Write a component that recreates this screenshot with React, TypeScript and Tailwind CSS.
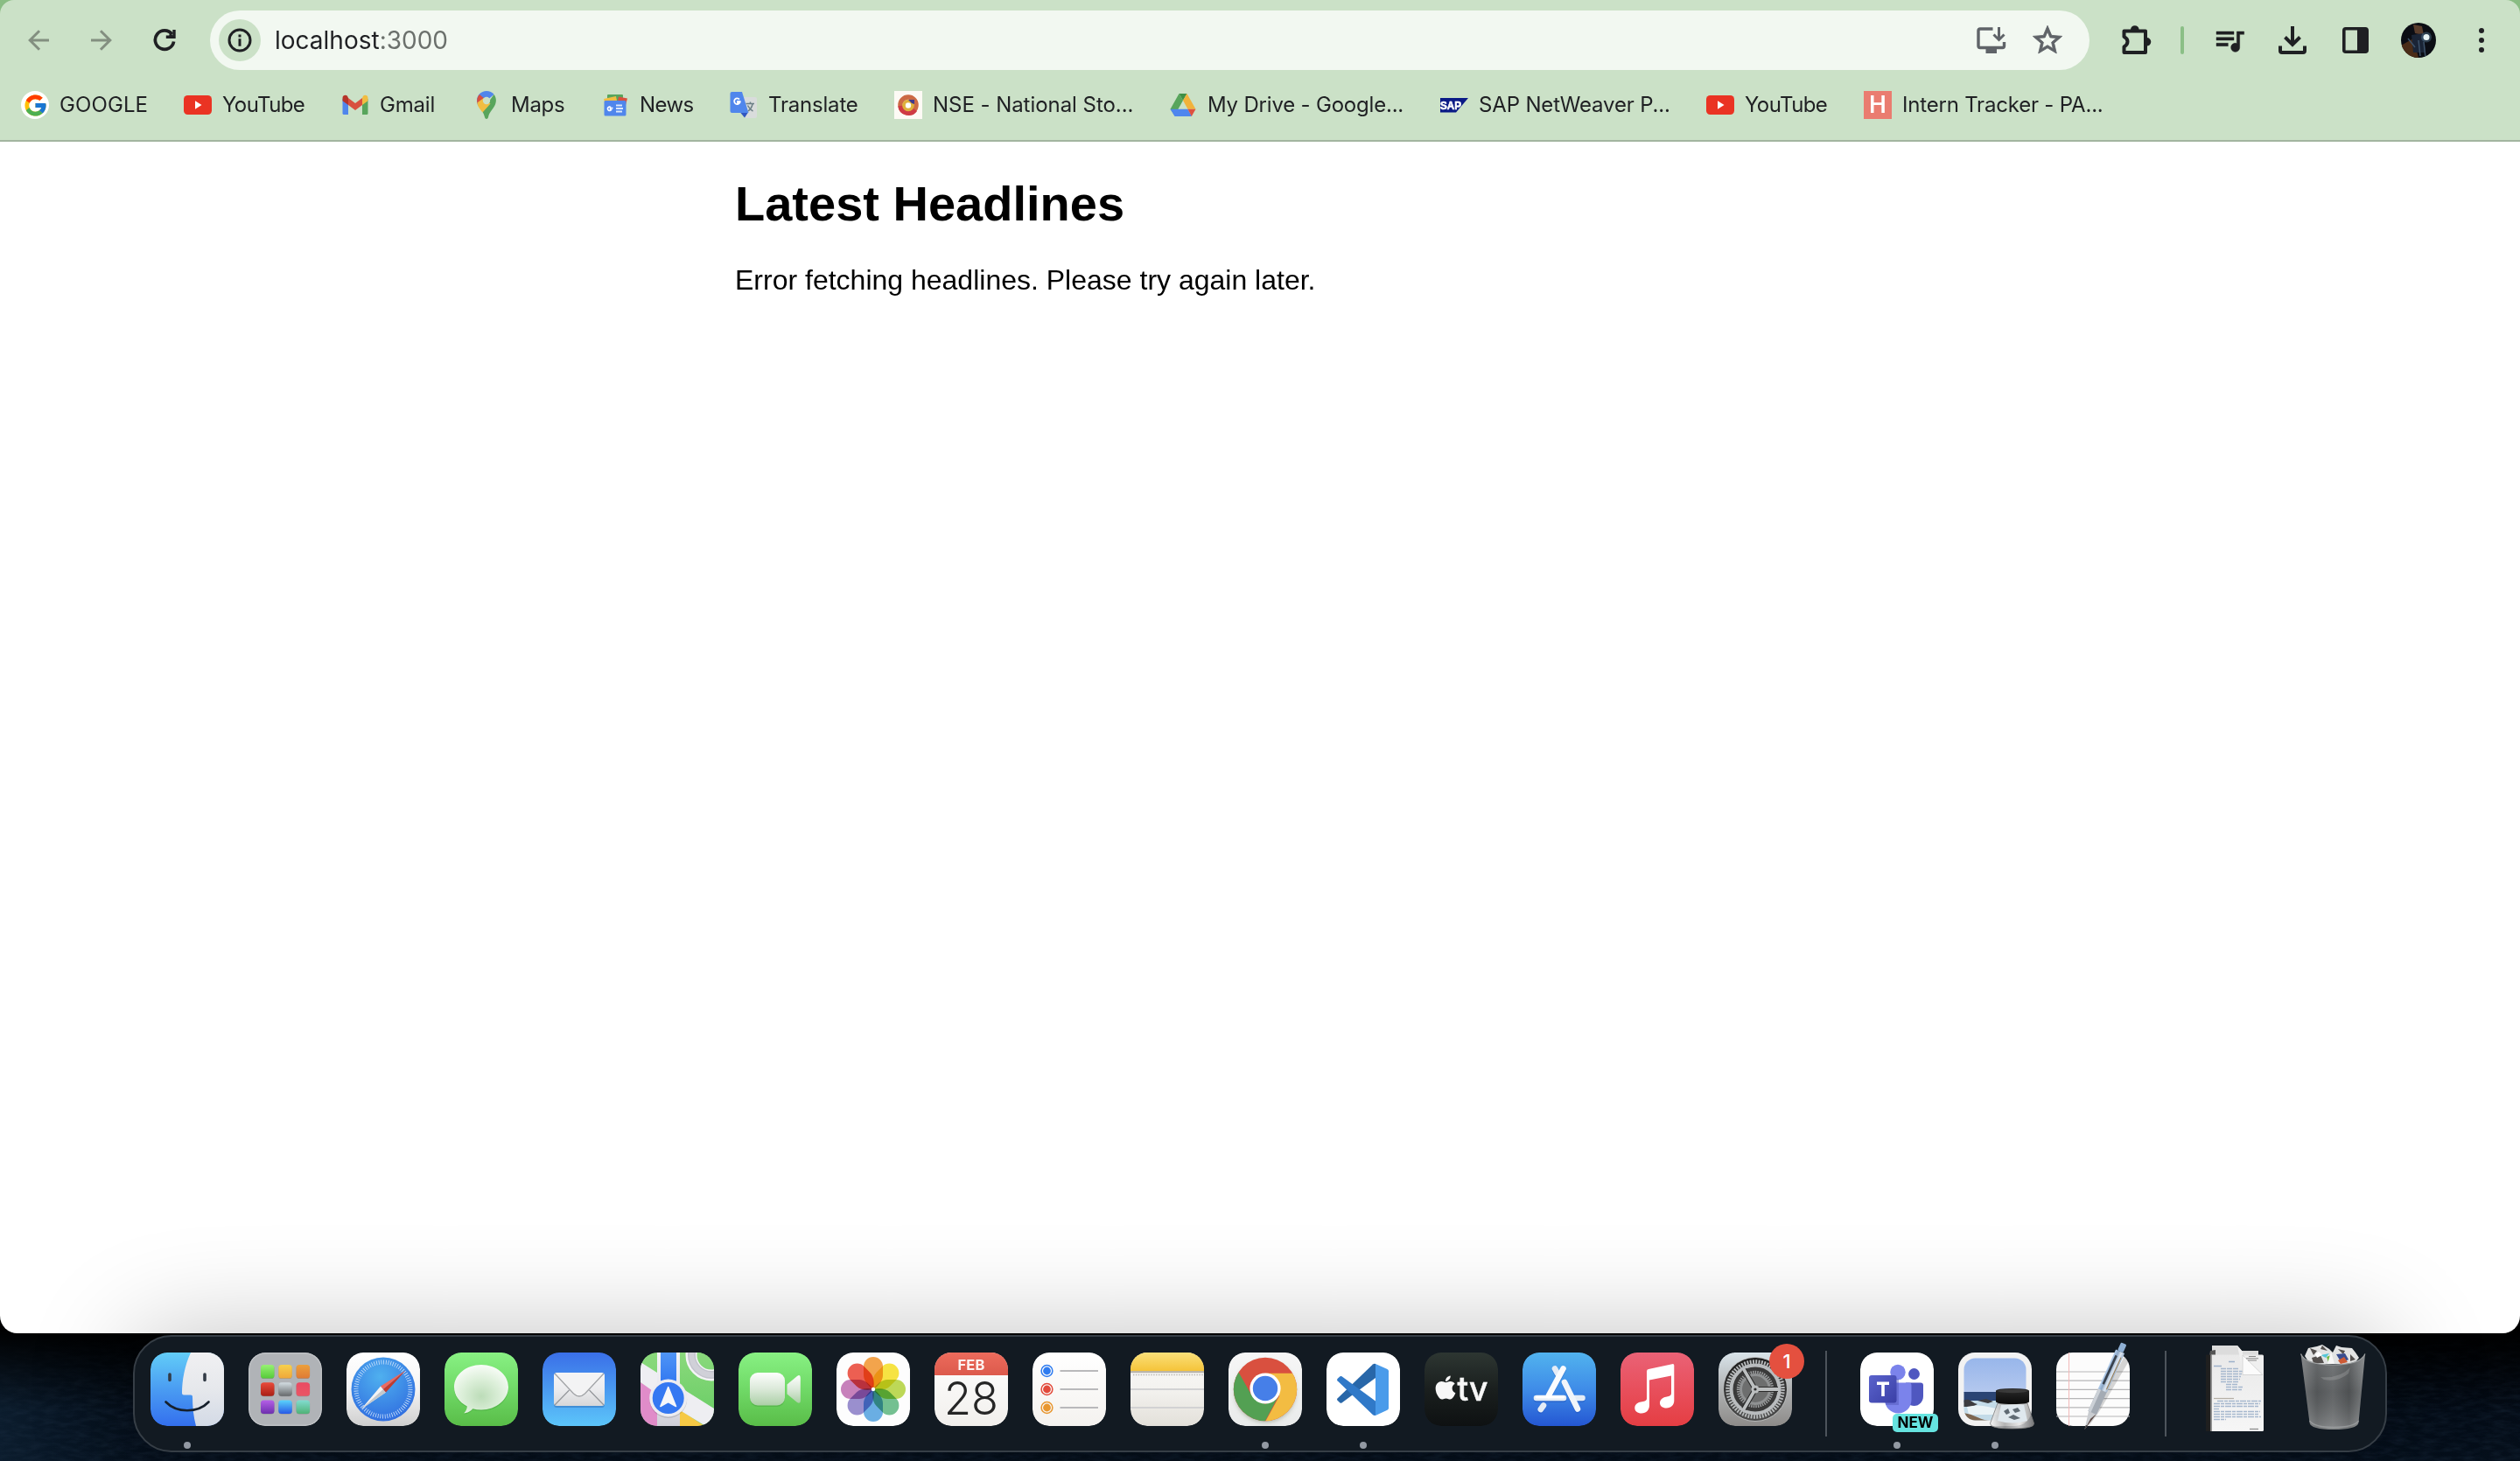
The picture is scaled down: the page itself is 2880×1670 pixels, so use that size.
import React from "react";
import { FcGoogle } from "react-icons/fc";
import { FaApple } from "react-icons/fa";

/* ---------- bookmark favicons, drawn in a 32 x 32 box ---------- */

const Fav = ({ children }: { children: React.ReactNode }) => (
  <svg viewBox="0 0 32 32" className="size-8 shrink-0">{children}</svg>
);

const GoogleFav = () => (
  <span className="flex size-8 shrink-0 items-center justify-center rounded-full bg-white">
    <FcGoogle className="size-[29px]" />
  </span>
);

const YouTubeFav = () => (
  <Fav>
    <rect y="5" width="32" height="22" rx="4.500" fill="#ea3323" />
    <path d="M13 11.200V20.800L20.500 16Z" fill="#fff" />
  </Fav>
);

const GmailFav = () => (
  <Fav>
    <path d="M1.500 9V25.500a1.500 1.500 0 0 0 1.500 1.500H8V13Z" fill="#5086ec" />
    <path d="M30.500 9V25.500a1.500 1.500 0 0 1-1.500 1.500H24V13Z" fill="#58a55c" />
    <path d="M24 8v8l6.500-4.800V8c0-3-3.500-4-5.500-2.300Z" fill="#f1bd42" />
    <path d="M8 16V8l8 6 8-6v8l-8 6Z" fill="#d85040" />
    <path d="M8 8v8l-6.500-4.800V8c0-3 3.500-4 5.500-2.300Z" fill="#b6342a" />
  </Fav>
);

const MapsFav = () => (
  <Fav>
    <path d="M16 0C9.500 0 5 5 5 11.200c0 3 1 5 2.500 7L24.500 4C22.500 1.500 19.500 0 16 0Z" fill="#5086ec" />
    <path d="M8 4 L14 9 8 16 5.500 14C4.500 10 5.500 6.500 8 4Z" fill="#d85040" />
    <path d="M24.500 4C28 8.500 27.500 14 24 19c-3.500 5-5 6.500-6 11-.5 2.500-3.500 2.500-4 0-.6-2.500-1.500-4.500-3-7Z" fill="#58a55c" />
    <path d="M20.500 14.500 11.500 24.500C9 21 6 18 5.300 13.500L12.800 8Z" fill="#f1bd42" />
    <circle cx="16" cy="11" r="4.200" fill="#cbe1c7" />
  </Fav>
);

const NewsFav = () => (
  <Fav>
    <rect x="7" y="4" width="18" height="12" rx="1" fill="#58a55c" />
    <path d="M3 9 17 6 19 16H5Z" fill="#f1bd42" />
    <path d="M20 6.500 30 8.500 28 16H18Z" fill="#d85040" />
    <rect x="3.500" y="11" width="25" height="17.500" rx="1.500" fill="#5086ec" />
    <path d="M13.500 19.500h-3v2h1a2.200 2.200 0 1 1-.5-3" fill="none" stroke="#fff" strokeWidth="1.600" />
    <path d="M17 16.500h7M17 20h8M17 23.500h7" stroke="#dbe7fb" strokeWidth="1.800" />
  </Fav>
);

const TranslateFav = () => (
  <Fav>
    <path d="M12 7H29a2 2 0 0 1 2 2V29a2 2 0 0 1-2 2H18Z" fill="#d9dcdc" />
    <path d="M12 24.500H21L17 30.500Z" fill="#3156c0" />
    <path d="M2.500 1H14L21.500 25H2.500A2 2 0 0 1 .5 23V3A2 2 0 0 1 2.500 1Z" fill="#5086ec" />
    <path d="M12.500 12H9v1.500h2.300A3.300 3.300 0 1 1 11 9.600" fill="none" stroke="#fff" strokeWidth="1.800" />
    <path d="M18.500 14.500H28M23.500 12.500v2M26 15c-.8 4-3 6.500-5 8M20.500 16.500c1.500 3 4 5.500 6 6.500" fill="none" stroke="#6c7f86" strokeWidth="1.500" />
  </Fav>
);

const NseFav = () => (
  <Fav>
    <rect width="32" height="32" fill="#fdfaf5" />
    <circle cx="16" cy="16" r="9" fill="none" stroke="#cc6a45" strokeWidth="5.500" />
    <path d="M6.800 17A9.500 9.500 0 0 0 24 21.500" fill="none" stroke="#cf3a44" strokeWidth="5" />
    <circle cx="16" cy="16.500" r="5" fill="none" stroke="#dfb03c" strokeWidth="3.600" />
    <path d="M16 10h7v5l-3-1Z" fill="#403a8c" />
    <circle cx="16" cy="16.500" r="2.600" fill="#fff" />
  </Fav>
);

const DriveFav = () => (
  <Fav>
    <path d="M11.500 3H20.500L16 11Z" fill="#3f8f46" />
    <path d="M11.500 3 16 10.800 6.500 28 1.500 20.800Z" fill="#58a55c" />
    <path d="M20.500 3 30.500 20.800H21.500L16 10.800Z" fill="#f1b23c" />
    <path d="M1.500 20.800H21.500L26 29H6.500Z" fill="#4f86ee" />
    <path d="M21.500 20.800H30.500L25.800 29Z" fill="#de5140" />
  </Fav>
);

const SapFav = () => (
  <Fav>
    <path d="M0 8H32L18 24.500H0Z" fill="#0a1a86" />
    <text x="0" y="20.800" fontFamily="Liberation Sans, sans-serif" fontWeight="700" fontSize="13" textLength="24" lengthAdjust="spacingAndGlyphs" fill="#fff" stroke="#fff" strokeWidth=".6">SAP</text>
  </Fav>
);

const HFav = () => (
  <span className="flex size-8 shrink-0 items-center justify-center bg-[#ea7c70] font-['Roboto',sans-serif] text-[28px] leading-none font-medium text-white">H</span>
);

const bookmarks = [
  { Icon: GoogleFav, label: "GOOGLE", cls: "w-[186px]", t: "tracking-[0.1px]" },
  { Icon: YouTubeFav, label: "YouTube", cls: "w-[180px]", t: "tracking-[-0.6px]" },
  { Icon: GmailFav, label: "Gmail", cls: "w-[150px]", t: "tracking-[-0.2px]" },
  { Icon: MapsFav, label: "Maps", cls: "w-[147px]", t: "tracking-[-0.3px]" },
  { Icon: NewsFav, label: "News", cls: "w-[147px]", t: "tracking-[-0.6px]" },
  { Icon: TranslateFav, label: "Translate", cls: "w-[188px]", t: "tracking-[-0.2px]" },
  { Icon: NseFav, label: "NSE - National Sto...", cls: "w-[314px]", t: "tracking-[-0.05px]" },
  { Icon: DriveFav, label: "My Drive - Google...", cls: "w-[310px]", t: "tracking-[-0.2px]" },
  { Icon: SapFav, label: "SAP NetWeaver P...", cls: "w-[304px]", t: "tracking-[-0.15px]" },
  { Icon: YouTubeFav, label: "YouTube", cls: "w-[180px]", t: "tracking-[-0.6px]" },
  { Icon: HFav, label: "Intern Tracker - PA...", cls: "w-[300px]", t: "tracking-[-0.2px]" },
];

/* ---------- dock icons, drawn in an 84 x 84 box ---------- */

const Tile = ({ children, clip = true, id }: { children: React.ReactNode; clip?: boolean; id: string }) => (
  <svg viewBox="0 0 84 84" className="block size-[84px] overflow-visible">
    <defs>
      <clipPath id={`clip-${id}`}><rect width="84" height="84" rx="19" /></clipPath>
    </defs>
    {clip ? <g clipPath={`url(#clip-${id})`}>{children}</g> : children}
  </svg>
);

const Grad = ({ id, stops, x2 = 0, y2 = 1 }: { id: string; stops: string[]; x2?: number; y2?: number }) => (
  <linearGradient id={id} x1="0" y1="0" x2={x2} y2={y2}>
    {stops.map((c, i) => <stop key={i} offset={i / (stops.length - 1)} stopColor={c} />)}
  </linearGradient>
);

const Base = ({ fill }: { fill: string }) => <rect width="84" height="84" rx="19" fill={fill} />;

const Finder = () => (
  <Tile id="finder">
    <Grad id="fi1" stops={["#62cdf8", "#4a9cf2", "#336fee"]} />
    <Grad id="fi2" stops={["#f0f0f2", "#e6e8ec", "#d3dae6"]} />
    <Base fill="url(#fi1)" />
    <path d="M46 0C39 15 36 32 36 46.500q0 2 2 2h8q2 0 2 2C48 62 49 73 52 84H84V0Z" fill="url(#fi2)" />
    <path d="M22 25v6.500M62 25v6.500" stroke="#333b46" strokeWidth="3.600" strokeLinecap="round" />
    <path d="M17.500 56.500C30 69.500 54 69.500 66.500 56.500" fill="none" stroke="#16202c" strokeWidth="2.600" strokeLinecap="round" />
  </Tile>
);

const launch = [
  ["#97f173", "#56cb3a"], ["#f6d04d", "#f0a83a"], ["#eca03c", "#df7a35"],
  ["#e94b3b", "#a91f14"], ["#d3dde2", "#66696b"], ["#ea4a62", "#ea5565"],
  ["#b45fe6", "#6d2fae"], ["#5ad3fb", "#2858e6"], ["#82dcd0", "#4fb276"],
];
const Launchpad = () => (
  <Tile id="launch">
    <Base fill="#b0b3b7" />
    <rect x=".8" y=".8" width="82.400" height="82.400" rx="18.500" fill="none" stroke="#c0c3c6" strokeWidth="1.200" />
    {launch.map((c, i) => (
      <g key={i}>
        <Grad id={`la${i}`} stops={c} />
        <rect x={14 + (i % 3) * 20.300} y={14.500 + Math.floor(i / 3) * 20.300} width="15.500" height="15.500" rx="3.600" fill="#00000030" />
        <rect x={14 + (i % 3) * 20.300} y={14 + Math.floor(i / 3) * 20.300} width="15.500" height="15.500" rx="3.600" fill={`url(#la${i})`} />
      </g>
    ))}
  </Tile>
);

const Safari = () => (
  <Tile id="safari">
    <Grad id="sa1" stops={["#ffffff", "#f4f4f4", "#cfcfcf"]} />
    <radialGradient id="sa2" cx=".45" cy=".3" r=".75"><stop offset="0" stopColor="#4fb0ef" /><stop offset="1" stopColor="#2f6bdf" /></radialGradient>
    <Base fill="url(#sa1)" />
    <circle cx="42" cy="42" r="36.500" fill="url(#sa2)" />
    <circle cx="42" cy="42" r="31" fill="none" stroke="#cfe4fb" strokeWidth="5" strokeDasharray=".8 1.905" />
    <path d="M16.500 65 39 38.500 45 45.500Z" fill="#f3f3f3" />
    <path d="M16.500 65 42 42 45 45.500Z" fill="#c4c8cc" />
    <path d="M67.500 20.500 39 38.500 42 42Z" fill="#ec6a60" />
    <path d="M67.500 20.500 45 45.500 42 42Z" fill="#c23b2d" />
  </Tile>
);

const greens = ["#88f183", "#70d967", "#59bd48"];
const Messages = () => (
  <Tile id="msg">
    <Grad id="ms1" stops={greens} />
    <radialGradient id="ms2" cx=".5" cy=".65" r=".65"><stop offset="0" stopColor="#bcdcb8" /><stop offset=".55" stopColor="#dcefd9" /><stop offset="1" stopColor="#f8fcf7" /></radialGradient>
    <Base fill="url(#ms1)" />
    <path d="M42 14.500c17.100 0 31 11.400 31 25.500S59.100 65.500 42 65.500c-3.400 0-6.700-.4-9.700-1.200C30 67 26 69.300 22.300 69.300c2.300-2.200 3.500-5 3.500-7.800C17 56.800 11 49 11 40c0-14.100 13.900-25.500 31-25.500Z" fill="#3c9a3460" transform="translate(0 1.200)" />
    <path d="M42 14c17.100 0 31 11.400 31 25.500S59.100 65.500 42 65.500c-3.400 0-6.700-.4-9.700-1.200C30 67 26 69.300 22.300 69.300c2.300-2.200 3.500-5 3.500-7.800C17 56.800 11 49 11 39.500 11 25.400 24.900 14 42 14Z" fill="url(#ms2)" />
  </Tile>
);

const Mail = () => (
  <Tile id="mail">
    <Grad id="ma1" stops={["#3a6fe8", "#4a9af0", "#5cc5fa"]} />
    <Grad id="ma2" stops={["#f5f5f6", "#ececee", "#d6d7d9"]} />
    <Base fill="url(#ma1)" />
    <rect x="13" y="25" width="58" height="38" rx="3.500" fill="#1c4f9a55" />
    <rect x="13" y="23" width="58" height="38" rx="3.500" fill="url(#ma2)" />
    <path d="M14 60 30.500 43M70 60 53.500 43" stroke="#94979b" strokeWidth="1.200" />
    <path d="M14 24 35.500 47q6.500 6 13 0L70 24Z" fill="#f3f3f4" />
    <path d="M14 24 35.500 47q6.500 6 13 0L70 24" fill="none" stroke="#a2a4a7" strokeWidth="1.300" />
  </Tile>
);

const MapsApp = () => (
  <Tile id="maps">
    <Grad id="mp1" stops={["#8ad97c", "#6fcf69"]} />
    <Grad id="mp2" stops={["#4f95f6", "#2e74f0"]} />
    <Grad id="mp3" stops={["#f3f3f6", "#e8e8ee", "#cfcfd8"]} />
    <Base fill="url(#mp1)" />
    <path d="M0 34 26 50V84H0Z" fill="#e08cc9" />
    <path d="M40 62 76 86H40Z" fill="#f6c945" />
    <path d="M0 11 84 64V90L45 66 0 34Z" fill="#eeeef2" />
    <path d="M19 0H45V84H19Z" fill="url(#mp3)" />
    <path d="M45 0 H84V63.500L45 39Z" fill="url(#mp1)" />
    <path d="M23 0H41V40H23Z" fill="url(#mp2)" />
    <circle cx="81" cy="3" r="23" fill="none" stroke="#f4f4f6" strokeWidth="13" />
    <circle cx="81" cy="3" r="22.500" fill="none" stroke="#c3c3cd" strokeWidth="9" />
    <circle cx="81" cy="3" r="22.500" fill="none" stroke="#d0d0d8" strokeWidth="6" />
    <circle cx="31.700" cy="53.500" r="21.500" fill="#00000022" />
    <circle cx="31.700" cy="52" r="21.500" fill="#ececf1" />
    <circle cx="31.700" cy="52" r="18" fill="#3478f2" />
    <path d="M31.700 39.500 40.500 61.500 31.700 56.500 22.900 61.500Z" fill="#f6f7fa" stroke="#f6f7fa" strokeWidth="1.600" strokeLinejoin="round" />
  </Tile>
);

const FaceTime = () => (
  <Tile id="ft">
    <Grad id="ft1" stops={greens} />
    <Grad id="ft2" stops={["#fdfefd", "#dbe9d9", "#abcfa6"]} />
    <Base fill="url(#ft1)" />
    <rect x="13" y="25" width="40" height="37" rx="9" fill="#2f7f2740" />
    <rect x="13" y="23" width="40" height="37.500" rx="9" fill="url(#ft2)" />
    <path d="M55.500 36.500 67 27q3.800-2.500 3.800 1.800V55q0 4.300-3.800 2L55.500 47.500Z" fill="url(#ft2)" />
  </Tile>
);

const petals = ["#f29a38", "#f5e02f", "#b6d445", "#65b985", "#5aa5e0", "#8f83c9", "#c173b4", "#ea4e3f"];
const Photos = () => (
  <Tile id="photos">
    <Base fill="#fdfdfd" />
    <g transform="translate(42 42)" className="isolate">
      {petals.map((c, i) => (
        <path key={c} d="M0 0C-6-4-11-10-11-16V-26A11 11 0 0 1 11-26V-16C11-10 6-4 0 0Z" fill={c} fillOpacity=".9" transform={`rotate(${i * 45})`} className="mix-blend-multiply" />
      ))}
      <circle r="2.200" fill="#fff" />
    </g>
  </Tile>
);

const Calendar = () => (
  <Tile id="cal">
    <Grad id="ca1" stops={["#ffffff", "#f1efec"]} />
    <Grad id="ca2" stops={["#ec6b5c", "#dc5a4c"]} />
    <Base fill="url(#ca1)" />
    <rect width="84" height="26" fill="url(#ca2)" />
    <text x="42" y="20" textAnchor="middle" fontFamily="Inter, sans-serif" fontWeight="700" fontSize="16.500" textLength="31" fill="#fdf3f1">FEB</text>
    <text x="42" y="71" textAnchor="middle" fontFamily="Inter, sans-serif" fontWeight="300" fontSize="52" textLength="62" lengthAdjust="spacingAndGlyphs" fill="#262626">28</text>
  </Tile>
);

const Reminders = () => (
  <Tile id="rem">
    <Grad id="re1" stops={["#ffffff", "#f4f2ef"]} />
    <Base fill="url(#re1)" />
    {["#2f7cf0", "#e24a3b", "#e8962f"].map((c, i) => (
      <g key={c}>
        <circle cx="16.500" cy={21 + i * 21} r="6.400" fill="none" stroke={c} strokeWidth="1.500" />
        <circle cx="16.500" cy={21 + i * 21} r="4.400" fill={c} />
        <path d={`M31.500 ${21 + i * 21}H75`} stroke="#b9b9bb" strokeWidth="1.800" />
      </g>
    ))}
  </Tile>
);

const Notes = () => (
  <Tile id="notes">
    <Grad id="no1" stops={["#fbfaf8", "#f3f2ef", "#e3e0da"]} />
    <Grad id="no2" stops={["#fae07a", "#f5c338"]} />
    <Base fill="url(#no1)" />
    <rect width="84" height="21.500" fill="url(#no2)" />
    <rect y="21.200" width="84" height="2" fill="#b3b0a8" />
    <path d="M3 25.500H84" stroke="#b9b7b2" strokeWidth="1.400" strokeDasharray="1.400 1.500" />
    <path d="M0 42H84M0 63H84" stroke="#d2d2d3" strokeWidth="1.800" />
  </Tile>
);

const Chrome = () => (
  <Tile id="chrome">
    <Grad id="ch1" stops={["#f6f6f6", "#e9ebeb"]} />
    <clipPath id="chc"><circle cx="42" cy="42" r="36.200" /></clipPath>
    <filter id="chs" x="-20%" y="-20%" width="140%" height="150%"><feGaussianBlur stdDeviation="2.500" /></filter>
    <Base fill="url(#ch1)" />
    <circle cx="42" cy="45" r="35" fill="#5d6a4a66" filter="url(#chs)" />
    <g clipPath="url(#chc)">
      <rect width="84" height="84" fill="#d9503f" />
      <path d="M11.500 22.500 26.500 49 42 59 57 50 41 80 42 84H0V22Z" fill="#53a053" />
      <path d="M84 23.700H42L58 50 41.500 80V84H84Z" fill="#f3bc42" />
    </g>
    <circle cx="42" cy="41" r="17.600" fill="#fff" />
    <circle cx="42" cy="41" r="14.200" fill="#467fe8" />
  </Tile>
);

const VSCode = () => (
  <Tile id="vsc">
    <Base fill="#ffffff" />
    <path d="M53 13.500q1.500-1 3-.5V29L17.500 57.500q-1 .6-2 0L12.500 54.700q-1-1.200 0-2.200Z" fill="#2867a9" />
    <path d="M53 71.300q1.500 1 3 .5V55.500L17.500 27.300q-1-.6-2 0L12.500 30q-1 1.200 0 2.200Z" fill="#3079c8" />
    <path d="M56 13 69.500 19q1.500.8 1.500 2.300V63.500q0 1.500-1.500 2.300L56 72Z" fill="#4a9bea" />
  </Tile>
);

const AppleTV = () => (
  <Tile id="tv">
    <Grad id="tv1" stops={["#2d3632", "#1a1f1e", "#0e1112"]} />
    <Base fill="url(#tv1)" />
    <FaApple x={8.500} y={24.500} size={31} color="#f7f7f7" />
    <text x="37.500" y="55" fontFamily="Inter, sans-serif" fontWeight="500" fontSize="38" textLength="35" lengthAdjust="spacingAndGlyphs" fill="#f7f7f7" stroke="#f7f7f7" strokeWidth=".5">tv</text>
  </Tile>
);

const AppStore = () => (
  <Tile id="as">
    <Grad id="as1" stops={["#51b3ee", "#3f8ce8", "#2457d3"]} />
    <Base fill="url(#as1)" />
    <g strokeLinecap="round" strokeWidth="6.600" fill="none">
      <g stroke="#1c4bb055" transform="translate(0 1.600)">
        <path d="M46.500 18.500 28 52M37 18.500 39.500 23M48 34 63 64.500M16 52H47M60 52H68.500M23 61 20.500 65" />
      </g>
      <path d="M37 18.500 40 24M60 52H68.500M16 52H47M24 60.500 20.800 65" stroke="#e4ecf6" />
      <path d="M48 34 63 64.500" stroke="#f1f5fa" />
      <path d="M46.500 18.500 30 49" stroke="#fafcfe" />
      <path d="M16 51H47" stroke="#fff" strokeWidth="3" />
    </g>
  </Tile>
);

const Music = () => (
  <Tile id="music">
    <Grad id="mu1" stops={["#ea6276", "#e84f5c", "#e53e43"]} />
    <Base fill="url(#mu1)" />
    <path d="M30 21.500q0-2 2-2.400L59 13.200q2.300-.5 2.300 1.600V55c0 4.500-3.300 8.500-8.800 8.500-4.500 0-7.500-2.500-7.500-5.800 0-4 3.300-6.300 7-7l3-.7q3-.7 3-3.500V26.500L33 31.500V60.500C33 65.500 29.500 69.500 24 69.500c-4.500 0-7.700-2.500-7.700-6 0-4 3-6.300 7-7l3.700-.7q3-.7 3-3.300Z" fill="#fff" />
  </Tile>
);

const Settings = () => (
  <Tile id="set">
    <Grad id="se1" stops={["#d9e4ea", "#b0b2b3", "#8d8b89"]} />
    <Grad id="se2" stops={["#1c1c1c", "#4d4d4d"]} />
    <Base fill="url(#se1)" />
    <circle cx="42" cy="42" r="36.500" fill="url(#se2)" stroke="#c9cbcb" strokeWidth=".8" />
    <circle cx="42" cy="42" r="31.500" fill="none" stroke="#b7babb" strokeWidth="4.500" strokeDasharray="1.900 1.400" />
    <circle cx="42" cy="42" r="27.500" fill="#3a3a3a" stroke="#b9bcbe" strokeWidth="4" />
    <circle cx="42" cy="42" r="19.500" fill="none" stroke="#9a9c9d" strokeWidth="3.400" strokeDasharray="1.500 1.100" />
    <circle cx="42" cy="42" r="16.500" fill="#6d6e6e" stroke="#8f9192" strokeWidth="3" />
    <path d="M42 42H68M42 42 29 19.500M42 42 29 64.500" stroke="#2a2a2a" strokeWidth="6" />
    <path d="M42 42H69M42 42 28.500 18.600M42 42 28.500 65.400" stroke="#bcbfc0" strokeWidth="3.800" />
    <circle cx="42" cy="42" r="4.500" fill="#bcbfc0" />
    <circle cx="42" cy="42" r="1.600" fill="#2b2b2b" />
  </Tile>
);

const Teams = () => (
  <Tile id="teams">
    <Grad id="te1" stops={["#5a63cc", "#3a3fa6"]} x2={1} />
    <Base fill="#ffffff" />
    <circle cx="61.500" cy="24.500" r="6.400" fill="#4f57c0" />
    <path d="M52 34.500H69q3 0 3 3V50c0 6-4.500 11-10.500 11S52 56 52 50Z" fill="#4f57c0" />
    <circle cx="43" cy="22.500" r="8.700" fill="#7b83eb" />
    <path d="M28 34.500H55.500q3 0 3 3V54c0 8.500-6.500 15.500-15 15.500S28 62.500 28 54Z" fill="#7b83eb" />
    <path d="M28 30H44V60H29Z" fill="#4d55b570" />
    <rect x="10" y="26" width="31.500" height="31.500" rx="3" fill="url(#te1)" />
    <path d="M19 35.300H33M26 35.300V50" stroke="#fff" strokeWidth="3.600" />
  </Tile>
);

const Preview = () => (
  <Tile id="prev" clip={false}>
    <Grad id="pr1" stops={["#93b3ea", "#b4c8ee"]} />
    <Grad id="pr2" stops={["#2b2b2b", "#0a0a0a"]} />
    <Grad id="pr3" stops={["#f5f5f5", "#a9a9a9", "#e6e6e6", "#8a8a8a"]} x2={1} y2={0} />
    <clipPath id="prc"><rect x="6.500" y="6.500" width="71" height="71" rx="13" /></clipPath>
    <Base fill="#f2f2f2" />
    <g clipPath="url(#prc)">
      <rect width="84" height="46" fill="url(#pr1)" />
      <rect y="45" width="84" height="12" fill="#2a4474" />
      <rect y="55" width="84" height="24" fill="#c3dbe8" />
      <path d="M4 56q6-4 10-1t8 4l-6 3H4ZM22 55l10-2 8 3-6 2Z" fill="#3d3c3f" />
      <path d="M10 62q12-3 24 0t18 3v6H12Z" fill="#eaf3f6" />
      <path d="M6 69q8 1 16 5t16 4H6Z" fill="#7d6650" />
    </g>
    <path d="M45 58H79L86.500 81q1 6-25 6t-25-6Z" fill="url(#pr3)" fillOpacity=".85" stroke="#7b7b7b" strokeWidth=".8" />
    <path d="M49 60H75L79 78q-17 5-34 0Z" fill="#dfe8ee" />
    <path d="M52 67l5-3 2 5-4 2ZM62 65l6-2 3 4-6 2ZM57 74l6-3 8 4-7 2Z" fill="#5f6a73" />
    <path d="M43 44q0-3 19-3t19 3V56q0 3-19 3t-19-3Z" fill="url(#pr2)" />
    <ellipse cx="62" cy="44" rx="17" ry="2.200" fill="#3a3a3a" />
  </Tile>
);

const TextEdit = () => (
  <Tile id="te" clip={false}>
    <Grad id="tx1" stops={["#b5d0ee", "#8ba6c6", "#dde6f0", "#9db3cc"]} x2={1} y2={0} />
    <Base fill="#fcfcfc" />
    <path d="M0 22H84M0 32.200H84M0 42.400H84M0 52.600H84M0 62.800H84M0 73H84" stroke="#b5b5b7" strokeWidth="1.200" />
    <path d="M14.500 0V84" stroke="#f2b9b9" strokeWidth="1" />
    <path d="M78 4 44 70 36 86 50 66 84 8Z" fill="#00000028" />
    <g transform="translate(32.500 88) rotate(24.500)">
      <path d="M0 0-4.800-22H4.800Z" fill="#c9ccd0" />
      <path d="M0 0 1-14 4.800-22Z" fill="#5d4a46" />
      <path d="M0 0-.8-5H.8Z" fill="#1d1d1d" />
      <rect x="-5.300" y="-50" width="10.600" height="29" fill="#a4abb4" />
      <rect x="-5.300" y="-50" width="3.500" height="29" fill="#ccd1d7" />
      <rect x="-5.500" y="-98" width="11" height="49" fill="url(#tx1)" />
      <rect x="-3.500" y="-108" width="7" height="10" rx="1.500" fill="#8fb0d4" />
      <rect x="-3.500" y="-92" width="2.600" height="36" fill="#39424e" />
      <rect x="3.200" y="-92" width="1" height="40" fill="#9a7d52" />
    </g>
  </Tile>
);

const docRows = [18.500, 21.500, 24.500, 27.500, 30.500, 33.500, 36.500, 39.500, 42.500];
const docRows2 = [55.500, 58.500, 61.500, 64.500, 67.500, 70.500, 73.500, 76.500];
const Doc = () => (
  <Tile id="doc" clip={false}>
    <Grad id="do1" stops={["#e9e9e9", "#f6f6f6"]} />
    <path d="M14-8H43L48-2H67V60H14Z" fill="#dcdcdc" />
    <path d="M12-2 18-3V8H10Z" fill="#555" />
    <rect x="12" y="2.500" width="61" height="87.500" rx="1.500" fill="url(#do1)" />
    <rect x="7" y="2.500" width="6" height="87.500" fill="#1f1f1f" />
    <rect x="12" y="2.500" width="1.800" height="87.500" fill="#7a7a7a" />
    <path d="M33 10.500H40M16 15.500H25M60 15.500H68" stroke="#9db1ca" strokeWidth="1.400" />
    {docRows.map((y, i) => <path key={y} d={`M${i > 5 ? 30 : 24} ${y}H${44 + ((i * 5) % 6)}`} stroke="#a6b8ce" strokeWidth="1.300" strokeDasharray="6 1" />)}
    <path d="M16 52.500H39" stroke="#b5b0a6" strokeWidth="1.200" />
    {docRows2.map((y, i) => <path key={y} d={`M${i === 0 ? 20 : 16} ${y}H${i === 3 ? 22 : i === 7 ? 30 : 70 - (i % 3)}`} stroke="#a6b8ce" strokeWidth="1.300" strokeDasharray="7 1 4 1" />)}
    <path d="M57 87.500H67" stroke="#8d8d8d" strokeWidth="1.300" />
    <path d="M43-8 49-1V4H73V25L50 26 49 22Z" fill="#efefef" />
    <path d="M49 3V25.500H72Z" fill="#fbfbfb" stroke="#cfcfcf" strokeWidth=".8" />
    <path d="M56 4.500H64M53 6.800H67M55 9H65" stroke="#888" strokeWidth="1" />
  </Tile>
);

const Trash = () => (
  <Tile id="trash" clip={false}>
    <Grad id="tr1" stops={["#7f8284", "#5c5f61", "#6d7072", "#56595b", "#85888a"]} x2={1} y2={0} />
    <Grad id="tr2" stops={["#ffffff10", "#00000018", "#ffffff30"]} />
    <path d="M8 4 12-5 22-7 28-9 36-4 40 0 44-8 50-6 62-5 66 0 70 6 64 13H14Z" fill="#e2e3e3" />
    <path d="M14-5l8 3-4 5ZM28-8l6 6-8-2ZM16 6l10-3 4 9H18ZM46-4l8 2-2 4ZM60 2l6 6-6 2Z" fill="#54504e" />
    <path d="M26 3l10-2-4 5Z" fill="#55c6d8" />
    <path d="M33 5l5-2-3 8Z" fill="#72b844" />
    <path d="M44 2l10-1 4 7-8 4Z" fill="#394d90" />
    <path d="M46 9l7-4 4 6-8 2Z" fill="#cd5a35" />
    <path d="M38-1 42 13 34 13Z" fill="#f7f7f7" />
    <path d="M20 2 24-1 28 3 22 6Z" fill="#fff" />
    <path d="M3.500 1.500C7 10 20 14 40 14S73.500 10 77 1.500L69.500 80C69 85.500 58 88 41 88S14 85.500 13.500 80Z" fill="url(#tr1)" />
    <path d="M3.500 1.500C7 10 20 14 40 14S73.500 10 77 1.500L69.500 80C69 85.500 58 88 41 88S14 85.500 13.500 80Z" fill="url(#tr2)" />
    <path d="M3.500 1.500C7 10 20 14 40 14S73.500 10 77 1.500" fill="none" stroke="#9da0a1" strokeWidth="1.200" />
    <path d="M13.500 78C18 84 30 85.500 41 85.500S65 84 69.700 78" fill="none" stroke="#a2a5a6" strokeWidth="1.400" opacity=".7" />
    <path d="M26 28Q48 30 60 17L58 24Q46 34 30 31Z" fill="#ffffff28" />
  </Tile>
);

const Dot = () => <span className="absolute top-[102px] left-[38px] size-2 rounded-full bg-[#9299a3]" />;

const apps = [Finder, Launchpad, Safari, Messages, Mail, MapsApp, FaceTime, Photos, Calendar, Reminders, Notes, Chrome, VSCode, AppleTV, AppStore, Music];
const running = [Finder, Chrome, VSCode];

export default function App() {
  return (
    <div className="relative isolate h-[1670px] w-[2880px] overflow-hidden bg-[#040d18] font-['Inter','Liberation_Sans',sans-serif]">
      {/* wallpaper */}
      <svg className="absolute inset-x-0 bottom-0 -z-10 h-[190px] w-[2880px]" viewBox="0 0 2880 190">
        <filter id="sea" x="0" y="0" width="100%" height="100%" colorInterpolationFilters="sRGB">
          <feTurbulence type="fractalNoise" baseFrequency=".06 .2" numOctaves="4" seed="7" />
          <feColorMatrix values="0 0 0 0 .13  0 0 0 0 .2  0 0 0 0 .28  1.200 0 0 0 -.42" />
        </filter>
        <Grad id="wall" stops={["#020406", "#030a14", "#050f1b"]} />
        <linearGradient id="wleft"><stop offset="0" stopColor="#0b1c2d" /><stop offset=".06" stopColor="#0b1c2d" stopOpacity="0" /></linearGradient>
        <linearGradient id="wsh" x1="0" y1="0" x2="0" y2="1"><stop offset=".2" stopColor="#000" /><stop offset=".7" stopColor="#000" stopOpacity="0" /></linearGradient>
        <rect width="2880" height="190" fill="url(#wall)" />
        <rect width="2880" height="190" fill="url(#wleft)" />
        <rect width="2880" height="190" filter="url(#sea)" opacity=".5" />
        <rect width="2880" height="190" fill="url(#wsh)" />
      </svg>

      {/* browser window */}
      <div className="flex h-[1524px] flex-col overflow-hidden rounded-b-[20px] bg-white">
        <div className="h-[162px] shrink-0 bg-[#8abd84]">
          <div className="h-[162px] rounded-t-[16px] border-b-2 border-[#a3b5a0] bg-[#cbe1c7]">
            <div className="flex h-[92px] items-center pl-8">
              <svg viewBox="0 0 24 24" className="size-6" fill="none" stroke="#838f80" strokeWidth="3"><path d="M24 12H2.500M13 1.200 2.200 12 13 22.800" /></svg>
              <svg viewBox="0 0 24 24" className="ml-12 size-6" fill="none" stroke="#838f80" strokeWidth="3"><path d="M0 12H21.500M11 1.200 21.800 12 11 22.800" /></svg>
              <svg viewBox="0 0 26 26" className="ml-[47px] size-[26px]" fill="none" stroke="#1f2023" strokeWidth="3.700">
                <path d="M21.600 6.200A10.700 10.700 0 1 0 23.600 14.500" />
                <path d="M24 1V9.300H14.800" strokeWidth="3.400" />
                <path d="M19 3.500 24 9.500H18Z" fill="#1f2023" stroke="none" />
              </svg>
              <div className="ml-[39px] flex h-[68px] w-[2148px] items-center rounded-full bg-[#f2f8f1] pl-[10px]">
                <span className="flex size-12 items-center justify-center rounded-full bg-[#cbe1c7]">
                  <svg viewBox="0 0 28 28" className="size-7" fill="none" stroke="#1f2023" strokeWidth="3"><circle cx="14" cy="14" r="12" /><path d="M14 12.200V20.800M14 7.500V10.500" /></svg>
                </span>
                <span className="ml-[16px] text-[28px] leading-none text-[#1f2023]">localhost<span className="text-[#6b706c]">:3000</span></span>
                <svg viewBox="0 0 34 30" className="mr-[2px] ml-auto h-[30px] w-[34px]" fill="none" stroke="#5f6368" strokeWidth="3.400">
                  <path d="M18.500 2H4Q2 2 2 4V21.500Q2 23.500 4 23.500H29.500Q31.500 23.500 31.500 21.500V17" />
                  <path d="M25.500 0V13M19.500 8.500 25.500 14.500 31.500 8.500" strokeWidth="3" />
                  <path d="M10.500 24.500H23V30H10.500Z" fill="#5f6368" stroke="none" />
                </svg>
                <svg viewBox="0 0 24 24" className="mr-[28px] ml-[25px] size-[40px]" fill="#5f6368" stroke="#5f6368" strokeWidth=".5">
                  <path d="M22 9.240l-7.190-.620L12 2 9.190 8.630 2 9.240l5.460 4.730L5.820 21 12 17.270 18.180 21l-1.630-7.030L22 9.240zM12 15.400l-3.760 2.270 1-4.280-3.320-2.880 4.380-.380L12 6.100l1.710 4.040 4.380.380-3.320 2.880 1 4.280L12 15.400z" />
                </svg>
              </div>
              <svg viewBox="0 0 36 36" className="ml-[36px] size-9" fill="none" stroke="#1f2023" strokeWidth="4" strokeLinejoin="round">
                <path d="M3.500 7.500H28V32H3.500V25.500Q7.500 23 7.500 19.500T3.500 14Z" />
                <path d="M11 6a4.800 4.800 0 0 1 9.600 0ZM29.500 15a4.800 4.800 0 0 1 0 9.600Z" fill="#1f2023" stroke="none" />
              </svg>
              <span className="ml-8 h-8 w-1 rounded-full bg-[#8bbf86]" />
              <svg viewBox="0 0 24 24" className="ml-[32px] size-[40px]" fill="#1f2023" stroke="#1f2023" strokeWidth=".25">
                <path d="M15 6H3v2h12V6zm0 4H3v2h12v-2zM3 16h8v-2H3v2zM17 6v8.180c-.31-.11-.65-.18-1-.18-1.660 0-3 1.340-3 3s1.340 3 3 3 3-1.340 3-3V8h3V6h-5z" />
              </svg>
              <svg viewBox="0 0 32 32" className="ml-[36px] size-8" fill="none" stroke="#1f2023" strokeWidth="4"><path d="M16 0V20M7.500 12.500 16 21 24.500 12.500M2 22.500V28Q2 30 4 30H28Q30 30 30 28V22.500" /></svg>
              <svg viewBox="0 0 30 30" className="ml-[41px] size-[30px]"><rect x="1.800" y="1.800" width="26.400" height="26.400" rx="2" fill="none" stroke="#1f2023" strokeWidth="3.600" /><path d="M17 2H28V28H17Z" fill="#1f2023" /></svg>
              <svg viewBox="0 0 40 40" className="ml-[37px] size-10 rounded-full">
                <rect width="40" height="40" fill="#0b0d14" />
                <path d="M0 26 14 18 20 40H0Z" fill="#4a2c17" />
                <path d="M14 2 24 4 26 14 16 12Z" fill="#5a3d2c" />
                <path d="M12 14 26 12 28 34H14Z" fill="#1a2436" />
                <path d="M20 20 22 38M26 22 28 40M8 18 16 28" stroke="#3d5269" strokeWidth="1.500" />
                <circle cx="29" cy="16.500" r="6" fill="#6fa0c055" />
                <circle cx="29" cy="16.500" r="3.500" fill="#e9f4f6" />
              </svg>
              <span className="ml-[49px] flex flex-col gap-[5px]">
                <span className="size-[6px] rounded-full bg-[#1f2023]" /><span className="size-[6px] rounded-full bg-[#1f2023]" /><span className="size-[6px] rounded-full bg-[#1f2023]" />
              </span>
            </div>
            <div className="flex h-14 items-center pl-6">
              {bookmarks.map(({ Icon, label, cls, t }, i) => (
                <div key={i} className={`${cls} flex shrink-0 items-center gap-3`}>
                  <Icon />
                  <span className={`${t} text-[24px] leading-none whitespace-nowrap text-[#1f2023]`}>{label}</span>
                </div>
              ))}
            </div>
          </div>
        </div>
        <main className="mx-auto w-[1200px] pt-[39px] font-['Liberation_Sans',Arial,sans-serif] text-black">
          <h1 className="text-[56px] leading-[64px] font-bold">Latest Headlines</h1>
          <p className="mt-[37px] text-[32px] leading-[37px]">Error fetching headlines. Please try again later.</p>
        </main>
      </div>

      {/* dock */}
      <div className="mx-auto mt-[2px] flex h-[134px] w-[2576px] gap-7 rounded-[44px] border-2 border-[#363e46] bg-[#121a22] pt-[18px] pl-[18px] shadow-[0_0_120px_rgba(0,0,0,0.25)]">
        {apps.map((Icon, i) => (
          <div key={i} className="relative size-[84px] shrink-0"><Icon />{running.includes(Icon) && <Dot />}</div>
        ))}
        <div className="relative size-[84px] shrink-0">
          <Settings />
          <span className="absolute -top-[10px] left-[58px] flex size-10 items-center justify-center rounded-full bg-[#e4503f] text-[22px] leading-none font-medium text-white">1</span>
        </div>
        <span className="mx-[10px] -mt-[2px] h-[98px] w-[2px] shrink-0 bg-[#4d545b]" />
        <div className="relative size-[84px] shrink-0">
          <Teams />
          <span className="absolute top-[70px] left-[37px] flex h-[21px] w-[52px] items-center justify-center rounded-[5px] bg-[#66e3e0] text-[17px] leading-none font-bold text-black">NEW</span>
          <Dot />
        </div>
        <div className="relative size-[84px] shrink-0"><Preview /><Dot /></div>
        <div className="relative size-[84px] shrink-0"><TextEdit /></div>
        <span className="mr-[10px] ml-[12px] -mt-[2px] h-[98px] w-[2px] shrink-0 bg-[#4d545b]" />
        <div className="relative size-[84px] shrink-0"><Doc /></div>
        <div className="relative size-[84px] shrink-0"><Trash /></div>
      </div>
    </div>
  );
}
